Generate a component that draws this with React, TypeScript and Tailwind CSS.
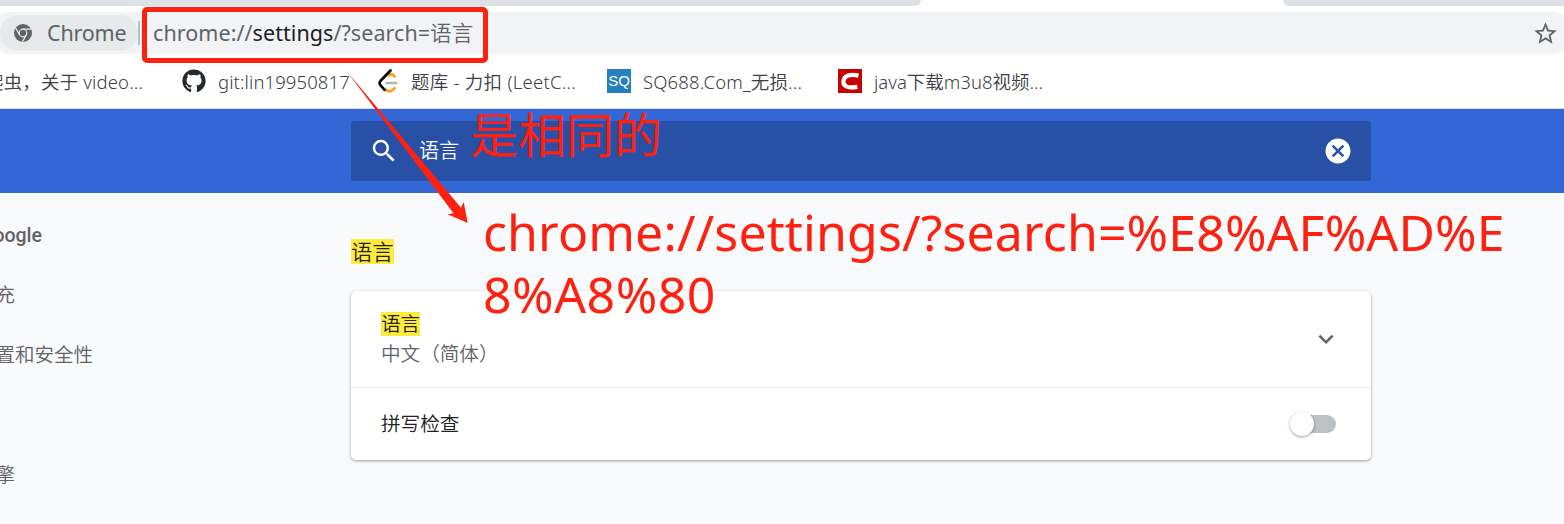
import React from "react";
import { FaGithub } from "react-icons/fa";
import { MdSearch, MdCancel, MdStarBorder, MdExpandMore } from "react-icons/md";

const ui = "font-['Noto_Sans','Noto_Sans_CJK_SC',sans-serif]";

function ChromeIcon() {
  return (
    <svg viewBox="0 0 18 18" className="h-[18px] w-[18px] shrink-0">
      <circle cx="9" cy="9" r="9" fill="#5f6368" />
      <circle cx="9" cy="9" r="3.8" fill="none" stroke="#e8eaed" strokeWidth="1.2" />
      <path d="M9 5.2H17M5.7 10.9L1.8 4.4M12.3 10.9L8.4 17.8" stroke="#e8eaed" strokeWidth="1.2" fill="none" />
    </svg>
  );
}

function LeetCodeIcon() {
  return (
    <svg viewBox="0 0 24 24" className="h-6 w-6 shrink-0" fill="none" strokeLinecap="round" strokeWidth="2.7">
      <path d="M11.5 6.4C13.4 4.8 15.4 5.2 16.8 6.6L17.6 7.6" stroke="#ffa116" />
      <path d="M17.6 19.2L16 20.8C13.8 22.6 10.8 22.6 8.6 20.6" stroke="#ffa116" />
      <path d="M9.6 14H19.4" stroke="#b3b3b3" strokeWidth="2.5" />
      <path d="M13.5 1.5L3.4 12Q1.8 14 3.4 16.2L7.6 20.8" stroke="#070706" />
    </svg>
  );
}

function Bookmark({ icon, children, className }: { icon?: React.ReactNode; children: React.ReactNode; className: string }) {
  return (
    <div className={`flex shrink-0 items-center whitespace-nowrap text-[18.5px] leading-6 text-[#3c4043] ${className}`}>
      {icon}
      <span className="relative top-px">{children}</span>
    </div>
  );
}

function MenuItem({ children, className }: { children: string; className: string }) {
  return (
    <div className={`flex h-[60px] items-center justify-end whitespace-nowrap text-[19.5px] text-[#5f6368] ${className}`}>
      <span className="shrink-0">{children}</span>
    </div>
  );
}

export default function App() {
  return (
    <div className={`relative flex h-[524px] w-full flex-col overflow-hidden bg-white font-[350] ${ui}`}>
      <div className="flex h-1.5 shrink-0 justify-between">
        <div className="w-[921px] rounded-br-lg bg-[#dee1e6]" />
        <div className="w-[281px] rounded-bl-lg bg-[#dee1e6]" />
      </div>

      <div className="-mx-1 mt-1.5 flex h-[42px] shrink-0 items-center rounded-[14px] bg-[#f1f3f4] pr-[9px] text-[21.5px] font-normal text-[#5f6368]">
        <div className="ml-1 flex h-9 w-[138px] items-center rounded-full bg-[#e6eaea] pl-3.5">
          <ChromeIcon />
          <span className="ml-[15px] tracking-[-0.2px]">Chrome</span>
        </div>
        <div className="h-6 w-0.5 bg-[#bdc1c6]" />
        <div className="ml-[13px] flex-1 whitespace-nowrap tracking-[0.06px]">
          <span>chrome://</span>
          <span className="text-[#202124]">settings</span>
          <span>/?search=</span>
          <span className="font-[350]">语言</span>
        </div>
        <MdStarBorder className="h-[27px] w-[27px]" />
      </div>

      <div className="flex h-[55px] shrink-0 items-center border-b border-[#dadce0]">
        <Bookmark className="-ml-[15px] mr-[11px] w-[186px] tracking-[0.15px]">爬虫，关于 video...</Bookmark>
        <Bookmark className="w-[195px] gap-3 tracking-[0.1px]" icon={<FaGithub className="h-6 w-6 text-[#24292e]" />}>git:lin19950817</Bookmark>
        <Bookmark className="w-[230px] gap-2.5 tracking-[0.25px]" icon={<LeetCodeIcon />}>题库 - 力扣 (LeetC...</Bookmark>
        <Bookmark
          className="w-[231px] gap-3 tracking-[0.15px]"
          icon={<span className="flex h-6 w-6 items-center justify-center bg-[#2480be] font-['Liberation_Sans',sans-serif] text-[15px] font-normal tracking-[-0.2px] text-white">SQ</span>}
        >
          SQ688.Com_无损...
        </Bookmark>
        <Bookmark
          className="gap-3"
          icon={
            <svg viewBox="0 0 24 24" className="h-6 w-6">
              <rect width="24" height="24" fill="#c90000" />
              <path d="M20.5 6.6C12 4.6 6 6.6 5.4 12.2C5 17.6 10 19.4 19.3 17.9" fill="none" stroke="white" strokeWidth="4.2" />
            </svg>
          }
        >
          java下载m3u8视频...
        </Bookmark>
      </div>

      <header className="flex h-[84px] shrink-0 items-center bg-[#3367d6]">
        <div className="ml-[351px] flex h-[60px] w-[1020px] items-center rounded-[3px] bg-[#2850a7] pl-[18px] pr-[18px] text-white">
          <MdSearch className="h-[30px] w-[30px]" />
          <span className="ml-5 flex-1 text-[20px]">语言</span>
          <MdCancel className="h-[30px] w-[30px]" />
        </div>
      </header>

      <main className="flex flex-1 bg-[#f8fafc]">
        <nav className="w-[351px] pt-3">
          <MenuItem className="w-[42px] pt-0.5 font-['Roboto',sans-serif] font-medium">oogle</MenuItem>
          <MenuItem className="w-[15px]">充</MenuItem>
          <MenuItem className="w-[93px]">置和安全性</MenuItem>
          <div className="h-[60px]" />
          <MenuItem className="w-[15px]">擎</MenuItem>
        </nav>
        <section className="w-[1020px] whitespace-nowrap pt-[46px] text-[#202124]">
          <h2 className="w-[43px] bg-[#ffeb3b] text-[21.3px] leading-[25px]">语言</h2>
          <div className="mt-[27px] h-[169px] rounded-[5px] bg-white text-[19.6px] shadow-[0_1px_3px_rgba(60,64,67,0.5)]">
            <div className="flex h-[97px] items-center justify-between border-b border-[#ebebeb] pl-[30px] pr-[30px]">
              <div>
                <div className="w-[39px] bg-[#ffeb3b] leading-6">语言</div>
                <div className="mt-1 leading-[27px] text-[#5f6368]">中文（简体）</div>
              </div>
              <MdExpandMore className="h-[30px] w-[30px] text-[#5f6368]" />
            </div>
            <div className="flex h-[72px] items-center justify-between pl-[30px] pr-[35px]">
              <span>拼写检查</span>
              <div className="flex h-[18px] w-[42px] items-center rounded-full bg-[#bdc1c6]">
                <div className="-ml-1 h-6 w-6 rounded-full bg-white shadow-[0_1px_3px_rgba(0,0,0,0.4)]" />
              </div>
            </div>
          </div>
        </section>
      </main>

      <div className="absolute left-[142px] top-[7px] h-[56px] w-[346px] rounded-[5px] border-[5px] border-[#ff2010]" />
      <svg className="absolute left-0 top-0 h-[524px] w-[600px]" viewBox="0 0 600 524">
        <path d="M346.5 71L461 207.7L463.7 202L467.7 223L447.5 214.3L453.5 213.3Z" fill="#ff2010" />
      </svg>
      <div className="absolute left-[470px] top-[105px] whitespace-nowrap text-[48px] font-normal leading-[60px] text-[#ff2010]">是相同的</div>
      <div className="absolute left-[483px] top-[201px] whitespace-nowrap text-[50px] font-normal leading-[62px] text-[#ff2010]">
        <div className="tracking-[0.11px]">chrome://settings/?search=%E8%AF%AD%E</div>
        <div className="tracking-[0.5px]">8%A8%80</div>
      </div>
    </div>
  );
}
